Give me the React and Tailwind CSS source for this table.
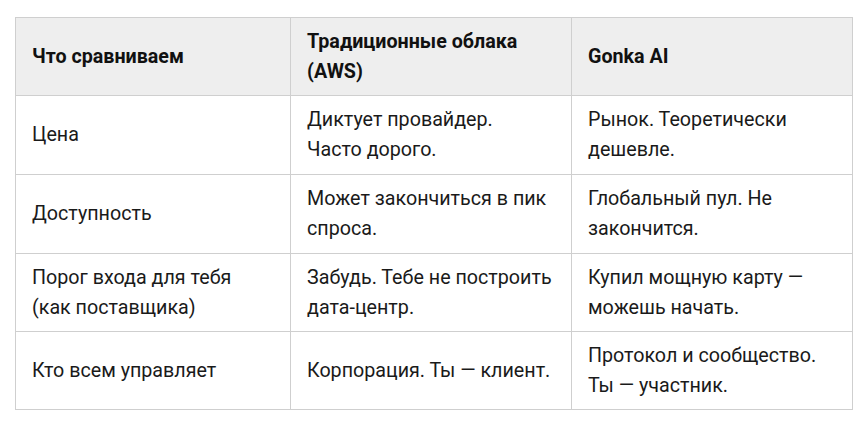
const rows = [
  { h: 'h-[79px]', cells: [['Цена'], ['Диктует провайдер.', 'Часто дорого.'], ['Рынок. Теоретически', 'дешевле.']] },
  { h: 'h-[79px]', cells: [['Доступность'], ['Может закончиться в пик', 'спроса.'], ['Глобальный пул. Не', 'закончится.']] },
  { h: 'h-[78px]', cells: [['Порог входа для тебя', '(как поставщика)'], ['Забудь. Тебе не построить', 'дата-центр.'], ['Купил мощную карту —', 'можешь начать.']] },
  { h: 'h-[78px]', cells: [['Кто всем управляет'], ['Корпорация. Ты — клиент.'], ['Протокол и сообщество.', 'Ты — участник.']] },
];

const Lines = ({ lines }) =>
  lines.map((l, k) => (
    <span key={k} className="block whitespace-nowrap">{l}</span>
  ));

// Таблица сравнения облаков
const App = () => {
  return (
    <div className="w-[868px] h-[426px] bg-white pt-[17px] pl-[15px] font-['Roboto',sans-serif] text-[19.7px] leading-[30px] text-[#1a1a1a]">
      <table className="w-[837px] border-collapse table-fixed">
        <colgroup>
          <col className="w-[275px]" />
          <col className="w-[281px]" />
          <col className="w-[281px]" />
        </colgroup>
        <thead>
          <tr className="bg-[#eeeeee] h-[78px]">
            <th className="border border-[#cfcfcf] px-4 py-[8px] text-left align-middle font-bold text-[#111]">Что сравниваем</th>
            <th className="border border-[#cfcfcf] px-4 py-[8px] text-left align-middle font-bold text-[#111]">
              <Lines lines={['Традиционные облака', '(AWS)']} />
            </th>
            <th className="border border-[#cfcfcf] px-4 py-[8px] text-left align-middle font-bold text-[#111]">Gonka AI</th>
          </tr>
        </thead>
        <tbody>
          {rows.map((r, i) => (
            <tr key={i} className={r.h}>
              {r.cells.map((c, j) => (
                <td key={j} className="border border-[#cfcfcf] px-4 py-[8px] align-middle">
                  <Lines lines={c} />
                </td>
              ))}
            </tr>
          ))}
        </tbody>
      </table>
    </div>
  );
};

export default App;
